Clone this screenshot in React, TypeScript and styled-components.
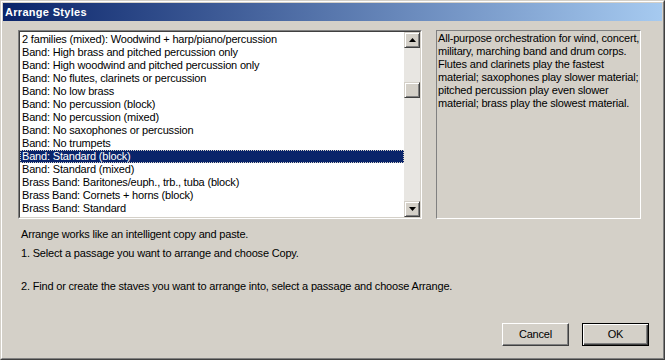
import React from "react";
import styled, { createGlobalStyle } from "styled-components";

const Global = createGlobalStyle`
  html, body { margin: 0; padding: 0; background: #d4d0c8; }
  body { font-family: "Liberation Sans", Arial, sans-serif; font-size: 11px; color: #000; letter-spacing: -0.18px; }
  * { box-sizing: border-box; }
`;

const Window = styled.div`
  width: 665px;
  height: 360px;
  border: 1px solid;
  border-color: #d4d0c8 #404040 #404040 #d4d0c8;
  background: #d4d0c8;
`;

const Frame = styled.div`
  height: 100%;
  border: 1px solid;
  border-color: #fff #808080 #808080 #fff;
  padding: 1px;
  display: flex;
  flex-direction: column;
`;

const TitleBar = styled.div`
  height: 18px;
  background: linear-gradient(to right, #0a246a, #a6caf0);
  color: #fff;
  font-weight: bold;
  font-size: 11px;
  line-height: 18px;
  padding-left: 2px;
  letter-spacing: 0.3px;
`;

const Content = styled.div`
  flex: 1;
  display: flex;
  flex-direction: column;
  padding: 9px 13px 11px 15px;
`;

const TopRow = styled.div`
  display: flex;
  gap: 14px;
  height: 189px;
`;

const ListBox = styled.div`
  width: 404px;
  height: 100%;
  border: 1px solid;
  border-color: #808080 #fff #fff #808080;
  display: flex;
`;

const ListInner = styled.div`
  flex: 1;
  display: flex;
  border: 1px solid;
  border-color: #404040 #d4d0c8 #d4d0c8 #404040;
  background: #fff;
  overflow: hidden;
`;

const Items = styled.div`
  flex: 1;
  overflow: hidden;
  padding-top: 1px;
`;

const Item = styled.div<{ $selected?: boolean }>`
  height: 13px;
  line-height: 13px;
  padding-left: 2px;
  white-space: nowrap;
  overflow: hidden;
  background: ${(p) => (p.$selected ? "#0a246a" : "transparent")};
  color: ${(p) => (p.$selected ? "#fff" : "#000")};
  outline: ${(p) => (p.$selected ? "1px dotted #d4d0c8" : "none")};
  outline-offset: -1px;
`;

const ScrollBar = styled.div`
  width: 16px;
  display: flex;
  flex-direction: column;
  background: #e8e6e2;
`;

const ScrollBtn = styled.div`
  width: 16px;
  height: 16px;
  background: #d4d0c8;
  border: 1px solid;
  border-color: #d4d0c8 #404040 #404040 #d4d0c8;
  box-shadow: inset 1px 1px 0 #fff, inset -1px -1px 0 #808080;
  display: flex;
  align-items: center;
  justify-content: center;
`;

const Track = styled.div`
  flex: 1;
  padding-top: 34px;
`;

const Thumb = styled(ScrollBtn)``;

const Arrow = ({ down }: { down?: boolean }) => (
  <svg width="7" height="4" viewBox="0 0 7 4" style={{ display: "block" }}>
    {down ? (
      <path d="M0 0h7L3.5 4z" fill="#000" />
    ) : (
      <path d="M0 4h7L3.5 0z" fill="#000" />
    )}
  </svg>
);

const Description = styled.div`
  width: 205px;
  height: 100%;
  border: 1px solid;
  border-color: #808080 #fff #fff #808080;
  padding: 1px 0 0 1px;
  line-height: 13px;
  white-space: nowrap;
`;

const Info = styled.div<{ $gap: number }>`
  margin-top: ${(p) => p.$gap}px;
  padding-left: 3px;
  line-height: 13px;
  white-space: nowrap;
`;

const Spacer = styled.div`
  flex: 1;
`;

const ButtonRow = styled.div`
  display: flex;
  justify-content: flex-end;
  gap: 13px;
`;

const Button = styled.div<{ $default?: boolean }>`
  width: 67px;
  height: 23px;
  border: 1px solid;
  border-color: ${(p) => (p.$default ? "#000" : "#fff #404040 #404040 #fff")};
  box-shadow: ${(p) =>
    p.$default
      ? "inset 1px 1px 0 #fff, inset -1px -1px 0 #404040, inset -2px -2px 0 #808080"
      : "inset -1px -1px 0 #808080"};
  background: #d4d0c8;
  display: flex;
  align-items: center;
  justify-content: center;
  line-height: 13px;
`;

const items = [
  "2 families (mixed): Woodwind + harp/piano/percussion",
  "Band: High brass and pitched percussion only",
  "Band: High woodwind and pitched percussion only",
  "Band: No flutes, clarinets or percussion",
  "Band: No low brass",
  "Band: No percussion (block)",
  "Band: No percussion (mixed)",
  "Band: No saxophones or percussion",
  "Band: No trumpets",
  "Band: Standard (block)",
  "Band: Standard (mixed)",
  "Brass Band: Baritones/euph., trb., tuba (block)",
  "Brass Band: Cornets + horns (block)",
  "Brass Band: Standard",
  "Choir: Soloist + SATB",
];

export default function App() {
  return (
    <>
      <Global />
      <Window>
        <Frame>
          <TitleBar>Arrange Styles</TitleBar>
          <Content>
            <TopRow>
              <ListBox>
                <ListInner>
                  <Items>
                    {items.map((t) => (
                      <Item key={t} $selected={t === "Band: Standard (block)"}>
                        {t}
                      </Item>
                    ))}
                  </Items>
                  <ScrollBar>
                    <ScrollBtn>
                      <Arrow />
                    </ScrollBtn>
                    <Track>
                      <Thumb />
                    </Track>
                    <ScrollBtn>
                      <Arrow down />
                    </ScrollBtn>
                  </ScrollBar>
                </ListInner>
              </ListBox>
              <Description>
                All-purpose orchestration for wind, concert,
                <br />
                military, marching band and drum corps.
                <br />
                Flutes and clarinets play the fastest
                <br />
                material; saxophones play slower material;
                <br />
                pitched percussion play even slower
                <br />
                material; brass play the slowest material.
              </Description>
            </TopRow>
            <Info $gap={9}>Arrange works like an intelligent copy and paste.</Info>
            <Info $gap={6}>1. Select a passage you want to arrange and choose Copy.</Info>
            <Info $gap={20}>
              2. Find or create the staves you want to arrange into, select a passage and choose Arrange.
            </Info>
            <Spacer />
            <ButtonRow>
              <Button>Cancel</Button>
              <Button $default>OK</Button>
            </ButtonRow>
          </Content>
        </Frame>
      </Window>
    </>
  );
}
